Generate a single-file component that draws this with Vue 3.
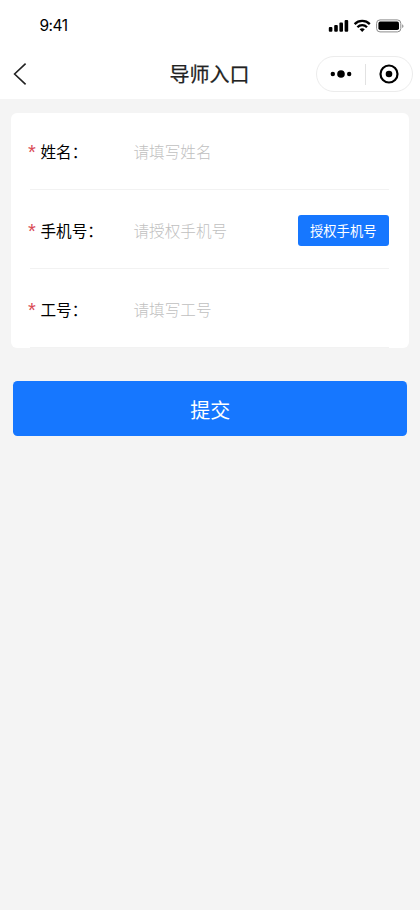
<script setup>
const fields = [
  { key: 'name', label: '姓名', placeholder: '请填写姓名' },
  { key: 'phone', label: '手机号', placeholder: '请授权手机号', action: '授权手机号' },
  { key: 'job', label: '工号', placeholder: '请填写工号' },
]
</script>

<template>
  <div class="page" lang="zh-CN">
    <header class="top">
      <div class="status">
        <span class="time">9:41</span>
        <svg class="indicators" width="76" height="16" viewBox="0 0 76 16">
          <rect x="0.8" y="8.9" width="3.6" height="4.9" rx="1" />
          <rect x="6.2" y="7" width="3.6" height="6.8" rx="1" />
          <rect x="11.4" y="4.5" width="3.6" height="9.3" rx="1" />
          <rect x="16.6" y="2" width="3.6" height="11.8" rx="1" />
          <g fill="none" stroke="#000" stroke-width="2.3">
            <path d="M26.6 6.1a10.8 10.8 0 0 1 15.2 0" />
            <path d="M29.4 9.2a6.8 6.8 0 0 1 9.6 0" />
          </g>
          <path d="M31.6 11.3a3.9 3.9 0 0 1 5.2 0L34.2 13.9z" />
          <rect x="48.6" y="1.9" width="24.2" height="12" rx="3.4" fill="none" stroke="#8c8c8c" stroke-width="1" />
          <rect x="50.4" y="3.6" width="20.6" height="8.5" rx="1.8" />
          <path d="M74.2 6.2c1.7.8 1.7 3 0 3.8z" fill="#8c8c8c" />
        </svg>
      </div>
      <nav class="nav">
        <svg class="back" width="14" height="24" viewBox="0 0 14 24">
          <path d="M12.6 1.6L1.6 12L12.6 22.4" fill="none" stroke="#222" stroke-width="1.6" />
        </svg>
        <h1 class="title">导师入口</h1>
        <div class="capsule">
          <svg width="22" height="10" viewBox="0 0 22 10">
            <circle cx="2.8" cy="5" r="2.2" />
            <circle cx="11" cy="5" r="3.8" />
            <circle cx="19.2" cy="5" r="2.2" />
          </svg>
          <span class="split"></span>
          <svg width="20" height="20" viewBox="0 0 20 20">
            <circle cx="10" cy="10" r="8.5" fill="none" stroke="#000" stroke-width="2.2" />
            <circle cx="10" cy="10" r="3.3" />
          </svg>
        </div>
      </nav>
    </header>

    <main>
      <section class="card">
        <div v-for="f in fields" :key="f.key" class="row">
          <span class="star">*</span>
          <span class="label">{{ f.label }}：</span>
          <span class="placeholder">{{ f.placeholder }}</span>
          <button v-if="f.action" class="grant">{{ f.action }}</button>
        </div>
      </section>
      <button class="submit">提交</button>
    </main>
  </div>
</template>

<style>
body {
  background: #f4f4f4;
}
</style>

<style scoped>
.page {
  min-height: 910px;
  background: #f4f4f4;
  font-family: "Noto Sans CJK SC", sans-serif;
  color: #000;
}
.top {
  height: 98.5px;
  background: #fff;
}
.status {
  display: flex;
  justify-content: space-between;
  align-items: center;
  height: 50px;
  padding: 0 16px 0 39.5px;
}
.time {
  font: 400 15.5px/20px Inter, sans-serif;
  letter-spacing: -0.5px;
  padding-top: 1px;
}
.indicators {
  margin-top: 2px;
}
.nav {
  display: grid;
  grid-template-columns: 97px 1fr 97px;
  align-items: center;
  height: 48px;
  padding: 0 7px 0 13px;
}
.title {
  margin: 0;
  padding-right: 7px;
  text-align: center;
  font-size: 20px;
  line-height: 28px;
  font-weight: 400;
  -webkit-text-stroke: 0.25px #222;
  color: #222;
}
.capsule {
  box-sizing: border-box;
  display: flex;
  align-items: center;
  justify-content: space-between;
  width: 97px;
  height: 36px;
  padding: 0 13px;
  border: 1px solid #ececec;
  border-radius: 18px;
}
.split {
  width: 1px;
  height: 21px;
  background: #e2e2e2;
}
main {
  display: flex;
  flex-direction: column;
  padding: 14.5px 11px 0;
}
.card {
  padding: 0 20px 0 19px;
  border-radius: 6px;
  background: #fff;
}
.row {
  box-sizing: border-box;
  display: flex;
  align-items: center;
  height: 79px;
  padding-top: 2.5px;
  border-bottom: 1.5px solid #f2f2f2;
  font-size: 15.6px;
  line-height: 24px;
}
.row:first-child {
  height: 76.5px;
  padding-top: 0;
}
.star {
  width: 12.5px;
  margin-left: -2px;
  padding-top: 3px;
  font-family: "Liberation Sans", sans-serif;
  font-size: 20px;
  color: #d94a55;
}
.label {
  width: 93px;
}
.placeholder {
  flex: 1;
  font-weight: 300;
  color: #bfbfbf;
}
button {
  border: 0;
  padding: 0;
  font-family: inherit;
  color: #fff;
  background: #1677ff;
}
.grant {
  width: 91.5px;
  height: 31px;
  margin-top: 1px;
  border-radius: 3px;
  font-size: 13.3px;
  line-height: 31px;
}
.submit {
  height: 55px;
  margin: 33.6px 2px 0 2.4px;
  padding-top: 2px;
  border-radius: 4.5px;
  font-size: 20px;
  line-height: 53px;
}
</style>
